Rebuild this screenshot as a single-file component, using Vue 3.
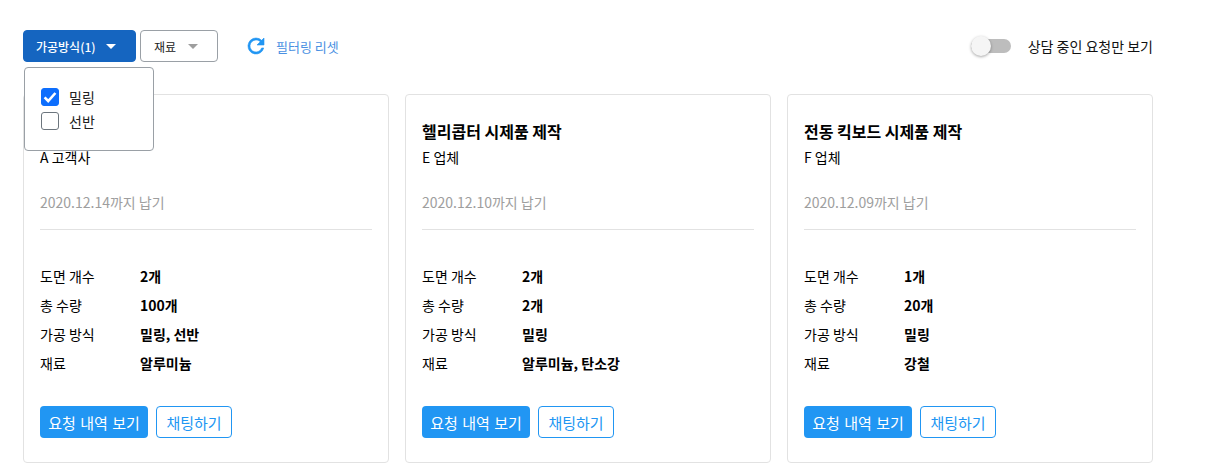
<script setup>
const cards = [
  { title: '드론 시제품 제작', client: 'A 고객사', due: '2020.12.14까지 납기', count: '2개', qty: '100개', method: '밀링, 선반', material: '알루미늄' },
  { title: '헬리콥터 시제품 제작', client: 'E 업체', due: '2020.12.10까지 납기', count: '2개', qty: '2개', method: '밀링', material: '알루미늄, 탄소강' },
  { title: '전동 킥보드 시제품 제작', client: 'F 업체', due: '2020.12.09까지 납기', count: '1개', qty: '20개', method: '밀링', material: '강철' }
]
</script>

<template>
  <div class="page">
    <div class="toolbar">
      <button class="filter active">가공방식(1)<span class="caret white"></span></button>
      <button class="filter plain">재료<span class="caret grey"></span></button>
      <div class="reset">
        <svg width="24" height="24" viewBox="0 0 24 24"><path fill="#2196f3" stroke="#2196f3" stroke-width=".6" d="M17.65 6.35A7.96 7.96 0 0 0 12 4a8 8 0 1 0 7.73 10h-2.08A6 6 0 1 1 12 6c1.66 0 3.14.69 4.22 1.78L13 11h7V4l-2.35 2.35z"/></svg>
        <span>필터링 리셋</span>
      </div>
      <div class="toggle-wrap">
        <span class="toggle"><span class="thumb"></span></span>
        <span class="toggle-label">상담 중인 요청만 보기</span>
      </div>
      <div class="menu">
        <label class="opt"><span class="box on"><svg width="18" height="18" viewBox="0 0 18 18"><path d="M3.6 9.4l3.6 3.6 7.2-8" fill="none" stroke="#fff" stroke-width="2.6"/></svg></span>밀링</label>
        <label class="opt"><span class="box"></span>선반</label>
      </div>
    </div>
    <div class="cards">
      <div v-for="c in cards" :key="c.client" class="card">
        <div class="title">{{ c.title }}</div>
        <div class="client">{{ c.client }}</div>
        <div class="due">{{ c.due }}</div>
        <div class="specs">
          <div class="row"><span class="k">도면 개수</span><b>{{ c.count }}</b></div>
          <div class="row"><span class="k">총 수량</span><b>{{ c.qty }}</b></div>
          <div class="row"><span class="k">가공 방식</span><b>{{ c.method }}</b></div>
          <div class="row"><span class="k">재료</span><b>{{ c.material }}</b></div>
        </div>
        <div class="actions">
          <button class="primary">요청 내역 보기</button>
          <button class="outline">채팅하기</button>
        </div>
      </div>
    </div>
  </div>
</template>

<style>
body { margin: 0; background: #fff; }
</style>
<style scoped>
.page { padding: 30px 78px 0 23px; font-family: "Noto Sans CJK KR", "Noto Sans", sans-serif; color: #000; font-size: 14px; }
button { font-family: inherit; cursor: pointer; }
.toolbar { position: relative; display: flex; align-items: center; height: 32px; }
.filter { height: 32px; border-radius: 4px; display: flex; align-items: center; font-size: 12px; padding: 0; box-sizing: border-box; }
.active { width: 113px; background: #1565c0; color: #fff; border: 1px solid #1565c0; padding-left: 12px; font-weight: 500; }
.plain { width: 78px; margin-left: 4px; background: #fff; color: #212121; border: 1px solid #9aa0a6; padding-left: 13px; }
.caret { width: 0; height: 0; border-left: 5px solid transparent; border-right: 5px solid transparent; border-top: 5px solid; }
.white { border-top-color: #fff; margin-left: 10px; }
.grey { border-top-color: #9e9e9e; margin-left: 12px; }
.reset { display: flex; align-items: center; margin-left: 26px; color: #4a90e2; font-size: 13px; gap: 8px; }
.toggle-wrap { margin-left: auto; display: flex; align-items: center; }
.toggle { position: relative; display: block; width: 40px; height: 14px; border-radius: 7px; background: #bdbdbd; }
.thumb { position: absolute; left: 0; top: -3px; width: 20px; height: 20px; border-radius: 50%; background: #f5f5f5; box-shadow: 0 1px 3px rgba(0,0,0,.35); }
.toggle-label { margin-left: 17px; font-size: 14px; color: #111; }
.menu { position: absolute; left: 1px; top: 37px; z-index: 2; width: 130px; height: 84px; box-sizing: border-box; border: 1px solid #9aa0a6; border-radius: 4px; background: #fff; padding: 20px 0 0 16px; display: flex; flex-direction: column; gap: 6px; }
.opt { display: flex; align-items: center; gap: 10px; height: 18px; font-size: 14px; color: #212121; }
.box { width: 18px; height: 18px; box-sizing: border-box; border: 1px solid #6c757d; border-radius: 3px; display: block; }
.box.on { background: #0d6efd; border-color: #0d6efd; }
.box.on svg { display: block; margin: -1px; }
.cards { display: flex; gap: 16px; margin-top: 32px; }
.card { flex: 1; height: 369px; box-sizing: border-box; border: 1px solid #e2e2e2; border-radius: 4px; padding: 24px 16px 0; }
.title { font-size: 16px; font-weight: 700; line-height: 24px; }
.client { font-size: 14px; line-height: 20px; margin-top: 4px; }
.due { font-size: 14px; line-height: 20px; margin-top: 25px; padding-bottom: 17px; color: #9e9e9e; border-bottom: 1px solid #e2e2e2; }
.specs { margin-top: 36px; display: flex; flex-direction: column; gap: 9px; }
.row { display: flex; height: 20px; line-height: 20px; }
.k { width: 100px; }
.row b { font-weight: 700; }
.actions { display: flex; gap: 8px; margin-top: 33px; }
.primary, .outline { height: 32px; border-radius: 4px; font-size: 15px; padding: 0; box-sizing: border-box; }
.primary { width: 108px; background: #2196f3; color: #fff; border: none; word-spacing: 1px; }
.outline { width: 76px; background: #fff; color: #2196f3; border: 1px solid #2196f3; }
</style>
